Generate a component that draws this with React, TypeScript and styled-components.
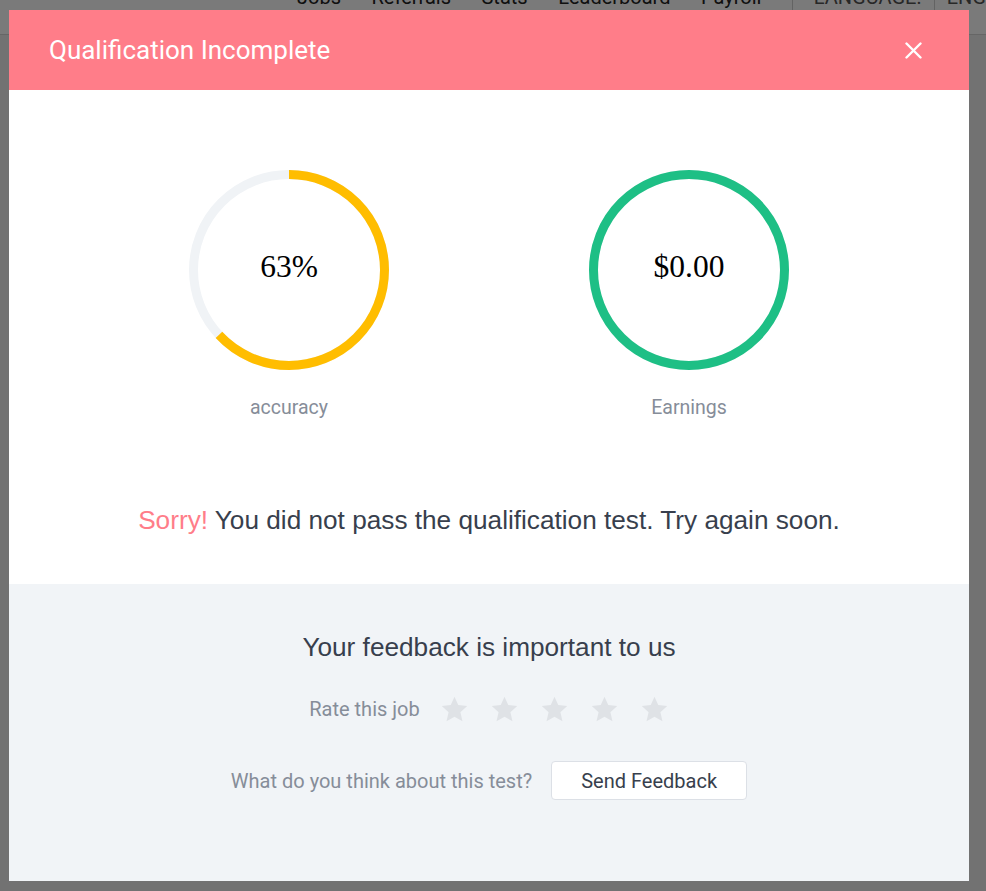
import React from 'react';
import styled, { createGlobalStyle } from 'styled-components';

const colors = {
  pink: '#ff7d89',
  yellow: '#ffbd00',
  green: '#1ebf85',
  track: '#f0f3f6',
  text: '#383f4d',
  muted: '#868d99',
  footer: '#f1f4f7',
  star: '#dfe2e6',
  border: '#dce0e6',
};

const GlobalStyle = createGlobalStyle`
  html, body {
    margin: 0;
    padding: 0;
    background: #efefef;
    font-family: Roboto, 'Liberation Sans', Arial, sans-serif;
  }
  * { box-sizing: border-box; }
`;

const navLinks = ['Jobs', 'Referrals', 'Stats', 'Leaderboard', 'Payroll'];

const RADIUS = 95.5;
const CIRC = 2 * Math.PI * RADIUS;

interface GaugeProps {
  value: string;
  label: string;
  color: string;
  percent: number;
}

const Gauge: React.FC<GaugeProps> = ({ value, label, color, percent }) => {
  return (
    <GaugeColumn>
      <Ring>
        <svg width="200" height="200" viewBox="0 0 200 200">
          <circle cx="100" cy="100" r={RADIUS} fill="none" stroke={colors.track} strokeWidth="9" />
          <circle
            cx="100"
            cy="100"
            r={RADIUS}
            fill="none"
            stroke={color}
            strokeWidth="9"
            strokeDasharray={`${CIRC * percent} ${CIRC}`}
            transform="rotate(-90 100 100)"
          />
        </svg>
        <RingValue>{value}</RingValue>
      </Ring>
      <GaugeLabel>{label}</GaugeLabel>
    </GaugeColumn>
  );
};

const StarIcon = () => (
  <svg width="29" height="29" viewBox="0 0 24 24">
    <polygon
      points="12,1.4 15.1,8.3 22.5,9.1 16.9,14.2 18.6,21.7 12,17.9 5.4,21.7 7.1,14.2 1.5,9.1 8.9,8.3"
      fill={colors.star}
    />
  </svg>
);

export default function App() {
  return (
    <Page>
      <GlobalStyle />
      <TopNav>
        {navLinks.map((link) => (
          <NavLink key={link}>{link}</NavLink>
        ))}
        <NavDivider />
        <LanguageLabel>LANGUAGE:</LanguageLabel>
        <NavDivider />
        <LanguageValue>ENG</LanguageValue>
      </TopNav>

      <Overlay>
        <Modal>
          <Header>
            <Title>Qualification Incomplete</Title>
            <CloseButton aria-label="Close">
              <svg width="17" height="17" viewBox="0 0 17 17">
                <path d="M1.5 1.5 L15.5 15.5 M15.5 1.5 L1.5 15.5" stroke="#fff" strokeWidth="2.4" strokeLinecap="round" />
              </svg>
            </CloseButton>
          </Header>

          <Results>
            <Gauges>
              <Gauge value="63%" label="accuracy" color={colors.yellow} percent={0.63} />
              <Gauge value="$0.00" label="Earnings" color={colors.green} percent={1} />
            </Gauges>
            <Message>
              <Sorry>Sorry!</Sorry> You did not pass the qualification test. Try again soon.
            </Message>
          </Results>

          <Footer>
            <FooterTitle>Your feedback is important to us</FooterTitle>
            <FooterRow>
              <FooterText>Rate this job</FooterText>
              <Stars>
                {[1, 2, 3, 4, 5].map((n) => (
                  <StarButton key={n}>
                    <StarIcon />
                  </StarButton>
                ))}
              </Stars>
            </FooterRow>
            <FeedbackRow>
              <FooterText>What do you think about this test?</FooterText>
              <FeedbackButton>Send Feedback</FeedbackButton>
            </FeedbackRow>
          </Footer>
        </Modal>
      </Overlay>
    </Page>
  );
}

const Page = styled.div`
  min-height: 100vh;
`;

const TopNav = styled.nav`
  height: 35px;
  background: #fff;
  border-bottom: 1px solid #d6d6d6;
  display: flex;
  align-items: flex-start;
  padding-left: 297px;
  overflow: hidden;
`;

const NavLink = styled.a`
  font-size: 20px;
  line-height: 24px;
  margin-top: -15px;
  margin-right: 30.5px;
  color: #222;
`;

const NavDivider = styled.div`
  width: 1px;
  height: 35px;
  background: #cfcfcf;
`;

const LanguageLabel = styled.span`
  font-size: 20px;
  line-height: 24px;
  margin-top: -15px;
  width: 148px;
  padding-left: 21px;
  color: #555;
`;

const LanguageValue = styled.span`
  font-size: 20px;
  line-height: 24px;
  margin-top: -15px;
  padding-left: 12px;
  color: #555;
`;

const Overlay = styled.div`
  position: fixed;
  inset: 0;
  background: rgba(0, 0, 0, 0.52);
  padding: 10px 0 0 9px;
`;

const Modal = styled.div`
  width: 960px;
  height: 871px;
  background: #fff;
  display: flex;
  flex-direction: column;
`;

const Header = styled.div`
  height: 80px;
  flex-shrink: 0;
  background: ${colors.pink};
  display: flex;
  align-items: center;
  justify-content: space-between;
  padding: 0 47px 0 40px;
`;

const Title = styled.h2`
  margin: 0;
  font-size: 26px;
  font-weight: 400;
  color: #fff;
`;

const CloseButton = styled.button`
  border: 0;
  background: transparent;
  padding: 0;
  display: flex;
  cursor: pointer;
`;

const Results = styled.div`
  height: 494px;
  flex-shrink: 0;
  padding-top: 80px;
  display: flex;
  flex-direction: column;
  align-items: center;
`;

const Gauges = styled.div`
  display: flex;
  gap: 200px;
`;

const GaugeColumn = styled.div`
  display: flex;
  flex-direction: column;
  align-items: center;
`;

const Ring = styled.div`
  position: relative;
  width: 200px;
  height: 200px;

  svg {
    display: block;
  }
`;

const RingValue = styled.div`
  position: absolute;
  inset: 0;
  display: flex;
  align-items: center;
  justify-content: center;
  font-family: 'Liberation Serif', 'Times New Roman', serif;
  font-size: 31.5px;
  color: #000;
  padding-bottom: 6px;
`;

const GaugeLabel = styled.div`
  margin-top: 27px;
  font-size: 19.5px;
  line-height: 22px;
  color: ${colors.muted};
`;

const Message = styled.p`
  margin: 87px 0 0;
  font-family: 'Liberation Sans', Arial, sans-serif;
  font-size: 26.2px;
  line-height: 28px;
  color: ${colors.text};
`;

const Sorry = styled.span`
  color: ${colors.pink};
`;

const Footer = styled.div`
  flex: 1;
  background: ${colors.footer};
  display: flex;
  flex-direction: column;
  align-items: center;
  padding-top: 49px;
`;

const FooterTitle = styled.h3`
  margin: 0;
  font-family: 'Liberation Sans', Arial, sans-serif;
  font-size: 26.2px;
  line-height: 28px;
  font-weight: 400;
  color: ${colors.text};
`;

const FooterRow = styled.div`
  display: flex;
  align-items: center;
  gap: 20px;
  margin-top: 33px;
  height: 30px;
`;

const FeedbackRow = styled(FooterRow)`
  gap: 19px;
  margin-top: 37px;
  height: 39px;
`;

const FooterText = styled.span`
  font-size: 20px;
  line-height: 22px;
  color: ${colors.muted};
`;

const Stars = styled.div`
  display: flex;
  gap: 21px;
`;

const StarButton = styled.span`
  display: flex;
  cursor: pointer;
`;

const FeedbackButton = styled.button`
  width: 196px;
  height: 39px;
  background: #fff;
  border: 1px solid ${colors.border};
  border-radius: 4px;
  font-family: Roboto, sans-serif;
  font-size: 20px;
  color: ${colors.text};
  cursor: pointer;
`;
